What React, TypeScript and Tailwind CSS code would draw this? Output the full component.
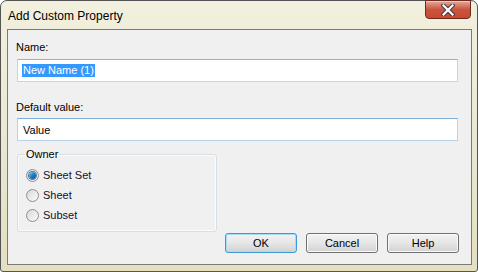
import React from "react";

const font = { fontFamily: '"Liberation Sans", Arial, sans-serif' };

function CloseGlyph() {
  return (
    <svg width="14" height="12" viewBox="0 0 14 12">
      <path d="M2.5 1.5 L11.5 10.5 M11.5 1.5 L2.5 10.5" stroke="#3b3b4a" strokeWidth="4.2" strokeLinecap="square" />
      <path d="M2.5 1.5 L11.5 10.5 M11.5 1.5 L2.5 10.5" stroke="#ffffff" strokeWidth="2.2" strokeLinecap="square" />
    </svg>
  );
}

function Radio({ label, checked }: { label: string; checked?: boolean }) {
  return (
    <label className="flex items-center h-[20px] gap-[4px]">
      <span className="w-[13px] h-[13px] rounded-full border border-[#8f8f8f] bg-gradient-to-br from-[#d8d8d8] to-[#fbfbfb] flex items-center justify-center">
        {checked && (
          <span className="w-[7px] h-[7px] rounded-full bg-gradient-to-br from-[#7ad1f7] via-[#1d7fc8] to-[#0b4a8c] ring-1 ring-[#4d7ea8]" />
        )}
      </span>
      <span className="text-[11px] text-[#101030]">{label}</span>
    </label>
  );
}

function Button({ label, primary }: { label: string; primary?: boolean }) {
  return (
    <button
      className={`w-[72px] h-[20px] rounded-[3px] border text-[11px] text-black bg-gradient-to-b from-[#f3f3f3] via-[#e6e6e6] to-[#d2d2d2] ${
        primary ? "border-[#3c9ad8] shadow-[inset_0_0_0_1px_#a8dcf5]" : "border-[#707070] shadow-[inset_0_0_0_1px_#fbfbfb]"
      }`}
    >
      {label}
    </button>
  );
}

export default function App() {
  return (
    <div style={font} className="w-[478px] h-[272px] overflow-hidden">
      <div className="w-[478px] h-[272px] flex flex-col border border-[#545454] rounded-t-[7px] rounded-b-[3px] bg-gradient-to-b from-[#f2f0de] via-[#ebe8d2] to-[#e4dfbf]">
        {/* Title bar */}
        <div className="h-[28px] flex items-start justify-between pl-[7px] pr-[6px]">
          <span className="text-[12px] leading-[16px] mt-[7px] text-black">Add Custom Property</span>
          <div className="w-[46px] h-[19px] -mt-[1px] rounded-b-[4px] border border-[#6a2b22] bg-gradient-to-b from-[#e7a898] via-[#c8553f] to-[#d0452d] flex items-center justify-center shadow-[inset_0_1px_0_#f3c7bb]">
            <CloseGlyph />
          </div>
        </div>

        {/* Client area */}
        <div className="ml-[6px] mr-[5px] h-[236px] border border-[#7a7a7a] bg-[#f0f0f0] flex flex-col text-[11px] leading-[16px] text-black">
          <span className="ml-[8px] mt-[9px]">Name:</span>
          <div className="ml-[9px] mt-[4px] w-[441px] h-[23px] bg-white border border-[#d0d2d6] border-t-[#abadb3] flex items-center pl-[4px]">
            <span className="bg-[#3399ff] text-white px-[1px] leading-[13px]">New Name (1)</span>
          </div>

          <span className="ml-[8px] mt-[17px]">Default value:</span>
          <div className="ml-[9px] mt-[3px] w-[441px] h-[23px] bg-white border border-[#b8d2ea] border-t-[#7eb0de] flex items-center pl-[5px]">
            Value
          </div>

          <fieldset className="ml-[9px] mt-[5px] w-[200px] h-[86px] border border-[#d5dfe5] rounded-[3px] pl-[8px] pt-[3px] shadow-[inset_0_0_0_1px_#fbfcfd]">
            <legend className="px-[1px] -ml-[1px] text-[11px] leading-[16px]">Owner</legend>
            <Radio label="Sheet Set" checked />
            <Radio label="Sheet" />
            <Radio label="Subset" />
          </fieldset>

          <div className="flex justify-end gap-[9px] mt-[1px] mr-[12px]">
            <Button label="OK" primary />
            <Button label="Cancel" />
            <Button label="Help" />
          </div>
        </div>
      </div>
    </div>
  );
}
